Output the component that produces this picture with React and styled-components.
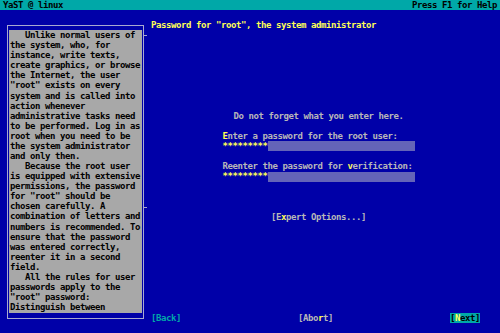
import React from "react";
import styled, { createGlobalStyle } from "styled-components";

const ROW = 333 / 33;

const GlobalStyle = createGlobalStyle`
  html, body {
    margin: 0;
    padding: 0;
    background: #0000a8;
  }
  body {
    font-family: "DejaVu Sans Mono", "Liberation Mono", monospace;
    font-size: 9px;
    letter-spacing: -0.42px;
    font-weight: bold;
    line-height: ${ROW}px;
  }
`;

const helpLines = [
  "   Unlike normal users of",
  "the system, who, for",
  "instance, write texts,",
  "create graphics, or browse",
  "the Internet, the user",
  "\"root\" exists on every",
  "system and is called into",
  "action whenever",
  "administrative tasks need",
  "to be performed. Log in as",
  "root when you need to be",
  "the system administrator",
  "and only then.",
  "   Because the root user",
  "is equipped with extensive",
  "permissions, the password",
  "for \"root\" should be",
  "chosen carefully. A",
  "combination of letters and",
  "numbers is recommended. To",
  "ensure that the password",
  "was entered correctly,",
  "reenter it in a second",
  "field.",
  "   All the rules for user",
  "passwords apply to the",
  "\"root\" password:",
  "Distinguish between",
];

const App = () => {
  return (
    <>
      <GlobalStyle />
      <Screen>
        <TopBar>
          <span>YaST @ linux</span>
          <span>Press F1 for Help</span>
        </TopBar>
        <Main>
          <HelpColumn>
            <HelpFrame>
              <ScrollTick top={9} />
              <ScrollTick top={181} />
              <HelpBox>
                {helpLines.map((line, i) => (
                  <Line key={i}>{line}</Line>
                ))}
              </HelpBox>
            </HelpFrame>
          </HelpColumn>
          <Content>
            <Title>Password for "root", the system administrator</Title>
            <FormArea>
              <Form>
                <Notice>Do not forget what you enter here.</Notice>
                <Label>
                  <Key>E</Key>nter a password for the root user:
                </Label>
                <FieldRow>
                  <Stars>*********</Stars>
                  <Field />
                </FieldRow>
                <Label>
                  Reenter the password for <Key>v</Key>erification:
                </Label>
                <FieldRow>
                  <Stars>*********</Stars>
                  <Field />
                </FieldRow>
                <Expert>
                  [E<Key>x</Key>pert Options...]
                </Expert>
              </Form>
            </FormArea>
            <ButtonRow>
              <Button color="#00a8a8">[Back]</Button>
              <Button color="#b8b8b8">
                [Abo<Key>r</Key>t]
              </Button>
              <Button color="#000000" active>
                [<Key>N</Key>ext]
              </Button>
            </ButtonRow>
          </Content>
        </Main>
      </Screen>
    </>
  );
};

const Screen = styled.div`
  width: 500px;
  height: 333px;
  display: flex;
  flex-direction: column;
  background: #0000a8;
  overflow: hidden;
`;

const TopBar = styled.div`
  height: ${ROW}px;
  background: #00a8a8;
  color: #000000;
  display: flex;
  justify-content: space-between;
  padding: 0 3px 0 3px;
  white-space: pre;
`;

const Main = styled.div`
  flex: 1;
  display: flex;
`;

const HelpColumn = styled.div`
  width: 150px;
  flex-shrink: 0;
`;

const HelpFrame = styled.div`
  position: relative;
  margin: 15px 0 0 7px;
  width: 133px;
  border: 1px solid #a8a8d0;
  padding: 4px 1px 5px 1px;
`;

const ScrollTick = styled.div`
  position: absolute;
  right: -4px;
  top: ${(p) => p.top}px;
  width: 4px;
  height: 1px;
  background: #a8a8d0;
`;

const HelpBox = styled.div`
  background: #a8a8a8;
  color: #000000;
  height: ${ROW * 28}px;
  padding-left: 1px;
  overflow: hidden;
`;

const Line = styled.div`
  white-space: pre;
  height: ${ROW}px;
`;

const Content = styled.div`
  flex: 1;
  display: flex;
  flex-direction: column;
  padding-left: 1px;
`;

const Title = styled.div`
  color: #ffff54;
  margin-top: ${ROW}px;
  white-space: pre;
`;

const FormArea = styled.div`
  display: flex;
  justify-content: center;
  padding-right: 14px;
  margin-top: ${ROW * 8}px;
`;

const Form = styled.div`
  width: 192px;
  display: flex;
  flex-direction: column;
  color: #b8b8b8;
`;

const Notice = styled.div`
  text-align: center;
  white-space: pre;
`;

const Label = styled.div`
  margin-top: ${ROW}px;
  white-space: pre;
`;

const Key = styled.span`
  color: #ffff54;
`;

const FieldRow = styled.div`
  display: flex;
  height: ${ROW}px;
  align-items: center;
`;

const Stars = styled.span`
  color: #ffff54;
  white-space: pre;
`;

const Field = styled.div`
  flex: 1;
  height: 10px;
  background: #6464b8;
`;

const Expert = styled.div`
  margin-top: ${ROW * 3}px;
  text-align: center;
  white-space: pre;
`;

const ButtonRow = styled.div`
  margin-top: ${ROW * 9}px;
  display: flex;
  justify-content: space-between;
  padding-right: 20px;
`;

const Button = styled.span`
  color: ${(p) => p.color};
  background: ${(p) => (p.active ? "#00a8a8" : "transparent")};
  white-space: pre;
`;

export default App;
